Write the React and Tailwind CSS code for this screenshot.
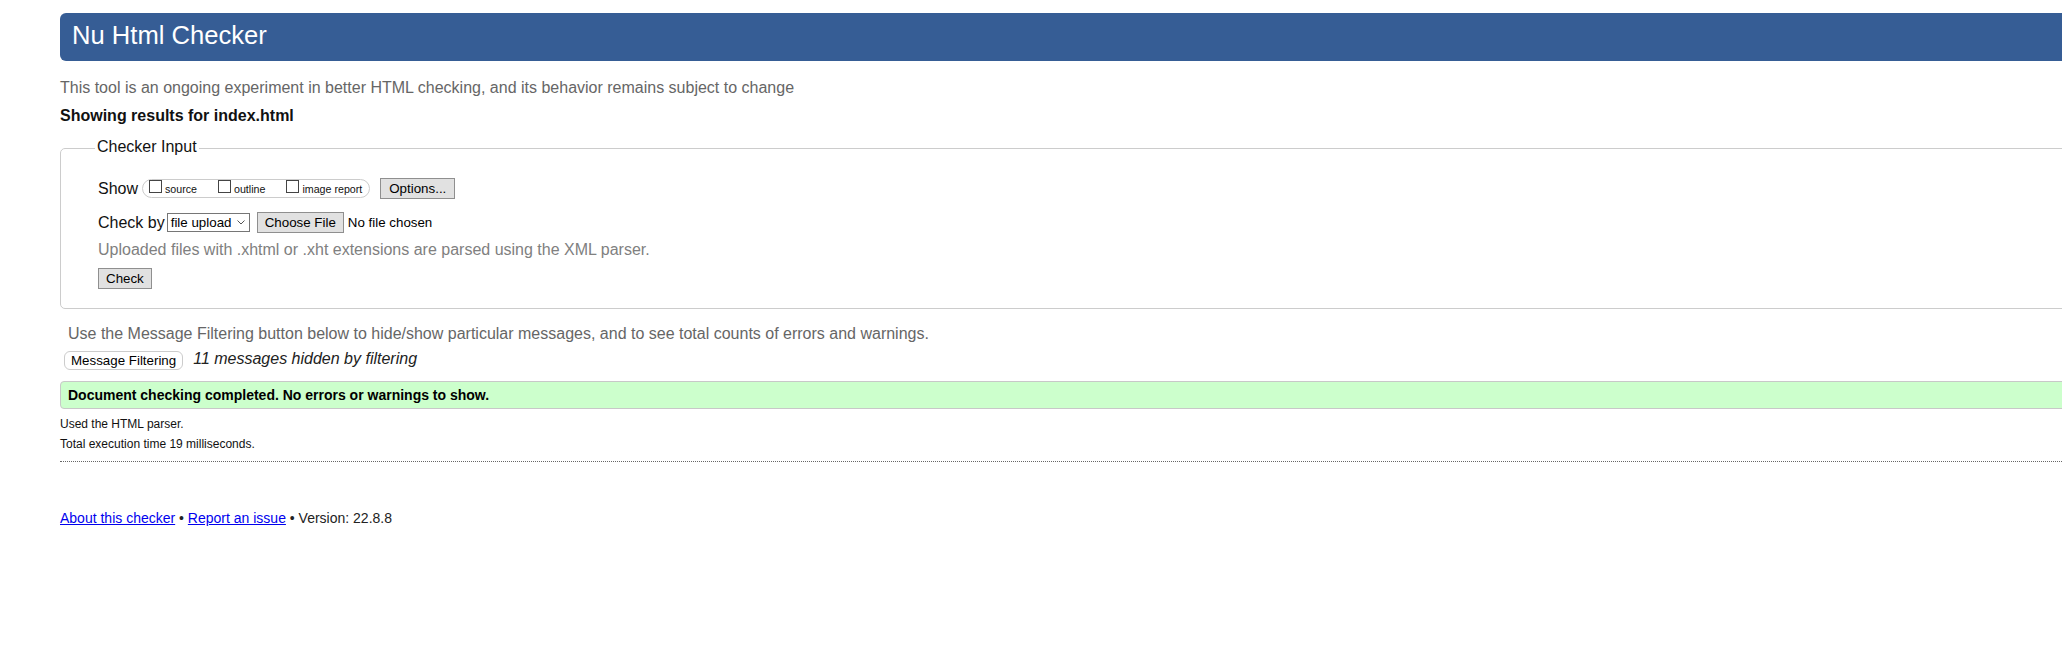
import React from 'react'

const Btn = ({ children, className = '' }) => (
  <button
    type="button"
    className={`h-[21px] border border-[#8f8f8f] bg-[#e1e1e1] text-[13.33px] leading-none text-black ${className}`}
  >
    {children}
  </button>
)

const ShowOption = ({ label }) => (
  <label className="flex items-end">
    <input type="checkbox" className="appearance-none w-[13px] h-[13px] m-0 border border-[#444] bg-white" />
    <span className="ml-[3px] text-[10.67px] leading-[8px] text-[#111]">{label}</span>
  </label>
)

const App = () => {
  return (
    <div className="min-h-screen bg-white overflow-hidden font-['Liberation_Sans',Arial,sans-serif] text-[16px] text-[#111]">
      <div className="pl-[60px] pt-[13px] w-[calc(100%+20px)]">
        {/* Header */}
        <h1 className="h-[48px] pt-[8px] pl-[12px] bg-[#365d95] rounded-l-[6px] text-white text-[25.6px] leading-[29px] font-normal">
          Nu Html Checker
        </h1>

        <p className="mt-[17px] leading-[20px] text-[#666]">
          This tool is an ongoing experiment in better HTML checking, and its behavior remains subject to change
        </p>
        <p className="mt-[8px] leading-[20px] font-bold text-[#111]">Showing results for index.html</p>

        {/* Checker input */}
        <fieldset className="mt-[11px] border border-[#ccc] rounded-[5px]">
          <legend className="ml-[34px] px-[2px] pb-[3px] leading-[20px] text-[#111]">Checker Input</legend>
          <div className="pl-[37px] pt-[18px] pb-[18px]">
            <div className="flex items-center h-[21px]">
              <span className="leading-[20px]">Show</span>
              <div className="ml-[4px] h-[19px] flex items-start gap-[21px] pl-[6px] pr-[7px] border border-[#ccc] rounded-full">
                <ShowOption label="source" />
                <ShowOption label="outline" />
                <ShowOption label="image report" />
              </div>
              <Btn className="ml-[10px] px-[8px]">Options...</Btn>
            </div>

            <div className="mt-[13px] flex items-center h-[21px]">
              <span className="leading-[20px]">Check by</span>
              <div className="ml-[2px] w-[83px] h-[19px] flex items-center justify-between pl-[3px] pr-[4px] border border-[#767676] bg-white">
                <span className="text-[13.33px] leading-none text-black">file upload</span>
                <svg width="8" height="5" viewBox="0 0 8 5" fill="none" stroke="#555" strokeWidth="1">
                  <path d="M0.5 0.5l3.5 3.5 3.5-3.5" />
                </svg>
              </div>
              <Btn className="ml-[7px] px-[7px]">Choose File</Btn>
              <span className="ml-[4px] text-[13.33px] leading-none text-black">No file chosen</span>
            </div>

            <p className="mt-[7px] leading-[20px] text-[#808080]">
              Uploaded files with .xhtml or .xht extensions are parsed using the XML parser.
            </p>

            <div className="mt-[6px]">
              <Btn className="px-[7px]">Check</Btn>
            </div>
          </div>
        </fieldset>

        {/* Filtering */}
        <p className="mt-[15px] ml-[8px] leading-[20px] text-[#666]">
          Use the Message Filtering button below to hide/show particular messages, and to see total counts of errors and warnings.
        </p>
        <div className="mt-[7px] ml-[4px] flex items-center h-[19px]">
          <button
            type="button"
            className="h-[19px] px-[6px] border border-[#ccc] rounded-[6px] bg-white text-[13.33px] leading-none text-black"
          >
            Message Filtering
          </button>
          <span className="ml-[10px] mb-[3px] italic leading-[20px] text-[#222]">11 messages hidden by filtering</span>
        </div>

        {/* Result */}
        <p className="mt-[11px] h-[28px] pl-[7px] border border-[#c8c8c8] rounded-l-[4px] bg-[#ccffcc] text-[14px] leading-[26px] font-bold text-black">
          Document checking completed. No errors or warnings to show.
        </p>

        <p className="mt-[5px] text-[12px] leading-[20px] text-[#111]">Used the HTML parser.</p>
        <p className="text-[12px] leading-[20px] text-[#111]">Total execution time 19 milliseconds.</p>

        <div className="mt-[7px] border-t border-dotted border-[#666]" />

        {/* Footer */}
        <p className="mt-[46px] text-[14px] leading-[20px] text-[#222]">
          <a href="#" className="text-[#0000ee] underline">About this checker</a>
          {' • '}
          <a href="#" className="text-[#0000ee] underline">Report an issue</a>
          {' • Version: 22.8.8'}
        </p>
      </div>
    </div>
  )
}

export default App
